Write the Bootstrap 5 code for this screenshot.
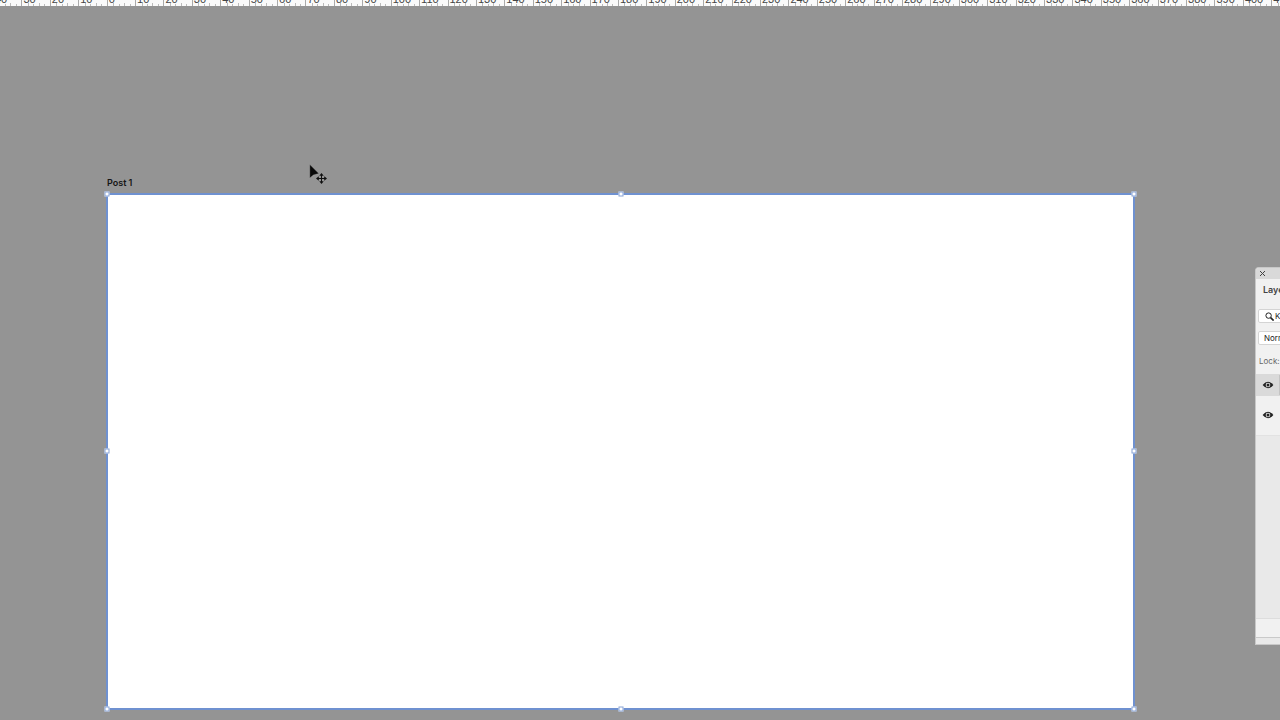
<!DOCTYPE html>
<html lang="en">
<head>
<meta charset="utf-8">
<meta name="viewport" content="width=device-width, initial-scale=1">
<title>Post 1</title>
<link href="https://cdn.jsdelivr.net/npm/bootstrap@5.3.0/dist/css/bootstrap.min.css" rel="stylesheet">
<style>
  body { background: #949494; color: #222; font-family: Inter, "Liberation Sans", sans-serif; font-size: 9px; line-height: 12px; }
  button, select { font: inherit; color: inherit; }
  .ruler { height: 6px; background: #fafafa; }
  .ruler-track { margin-left: -7px; margin-right: -20px; height: 6px; }
  .unit { flex: 1 1 0; min-width: 0; height: 6px; border-left: 1px solid #aaa; }
  .unit-label { left: 1px; bottom: 1px; font: 11px/11px "Liberation Sans", sans-serif; color: #444; }
  .tick { flex: 1 1 0; height: 2px; border-left: 1px solid #bbb; }
  .tick:first-child { border-color: transparent; }
  .tick:nth-child(even) { height: 3px; }
  .workspace { padding-left: 106px; }
  .board-column { margin-top: 171px; margin-right: 120px; }
  .board-title { font-size: 9px; line-height: 12px; font-weight: 600; color: #151515; padding-left: 1px; margin-bottom: 4px; }
  .artboard { box-sizing: content-box; aspect-ratio: 2 / 1; border: 2px solid #6f91d0; }
  .grips { inset: -1px; }
  .grip { width: 5px; height: 5px; background: #fff; border: 1px solid #88a3d6; }
  .pointer { left: 309px; top: 164px; }
  .panel-slot { width: 25px; margin-top: 261px; height: 378px; border: 1px solid #c8c8c8; border-width: 1px 0 1px 1px; border-radius: 4px 0 0 0; background: #e9e9e9; }
  .panel-body { width: 240px; font-size: 8px; }
  .panel-bar { height: 11px; background: #d9d9d9; }
  .panel-tools { background: #f1f1f1; height: 95px; padding: 5px 2px 0; }
  .tab-button { font-size: 9px; line-height: 12px; padding: 0 5px; margin-bottom: 13px; font-weight: 600; color: #444; }
  .field { height: 14px; width: 90px; background: #fff; border: 1px solid #d4d4d4; border-radius: 2px; }
  .field select { appearance: none; background: none; border: 0; padding: 0; line-height: 12px; }
  .field-filter { padding-left: 6px; gap: 1px; }
  .field-mode { margin-top: 8px; padding-left: 5px; }
  .lock-label { margin-top: 10px; padding-left: 1px; color: #666; }
  .layer-row { padding-left: 6px; padding-bottom: 1px; background: #f1f1f1; height: 39px; }
  .layer-row.chosen { background: #dadada; height: 22px; }
  .thumb { width: 20px; height: 20px; background: #fff; border: 1px solid #c4c4c4; margin-left: 5px; }
  .layers-empty { height: 183px; border-top: 1px solid #e2e2e2; }
  .panel-foot { height: 20px; background: #f1f1f1; border-top: 1px solid #ddd; border-bottom: 1px solid #c9c9c9; }
</style>
<script src="https://cdn.jsdelivr.net/npm/bootstrap@5.3.0/dist/js/bootstrap.bundle.min.js"></script>
</head>
<body class="position-relative overflow-hidden vh-100">
<header class="ruler overflow-hidden"><div class="ruler-track d-flex" id="ruler"></div></header>
<main class="workspace d-flex align-items-start">
  <section class="board-column flex-grow-1">
    <h1 class="board-title mt-0">Post 1</h1>
    <div class="artboard bg-white position-relative">
      <div class="grips position-absolute">
        <i class="grip position-absolute top-0 start-0 translate-middle"></i>
        <i class="grip position-absolute top-0 start-50 translate-middle"></i>
        <i class="grip position-absolute top-0 start-100 translate-middle"></i>
        <i class="grip position-absolute top-50 start-0 translate-middle"></i>
        <i class="grip position-absolute top-50 start-100 translate-middle"></i>
        <i class="grip position-absolute top-100 start-0 translate-middle"></i>
        <i class="grip position-absolute top-100 start-50 translate-middle"></i>
        <i class="grip position-absolute top-100 start-100 translate-middle"></i>
      </div>
    </div>
  </section>
  <aside class="panel-slot flex-shrink-0 overflow-hidden">
    <div class="panel-body">
      <div class="panel-bar d-flex align-items-center">
        <button class="btn p-0 border-0 d-flex ms-1" aria-label="Close panel"><svg width="5" height="5" viewBox="0 0 5 5" stroke="#444"><path d="M0 0L5 5M5 0L0 5"/></svg></button>
      </div>
      <div class="panel-tools">
        <button class="tab-button btn border-0 d-block rounded-0">Layers</button>
        <label class="field field-filter d-flex align-items-center">
          <svg width="9" height="9" viewBox="0 0 9 9" fill="none" stroke="#222"><circle cx="3.6" cy="3.6" r="2.7"/><path d="M5.6 5.6L8.6 8.6" stroke-width="1.6"/></svg>
          <select aria-label="Filter"><option>Kind</option></select>
        </label>
        <label class="field field-mode d-flex align-items-center"><select aria-label="Blend mode"><option>Normal</option></select></label>
        <div class="lock-label">Lock:</div>
      </div>
      <div class="layer-row chosen d-flex align-items-center">
        <button class="btn border-0 p-0 d-flex" aria-label="Toggle Post 1"><svg width="12" height="8" viewBox="0 0 12 8"><path d="M.6 4Q6-2.6 11.4 4Q6 10.6.6 4Z" fill="#222"/><circle cx="6" cy="4" r="2.3" fill="#eee"/><circle cx="6" cy="4" r="1.5" fill="#222"/></svg></button>
        <span class="thumb"></span>
      </div>
      <div class="layer-row d-flex align-items-center">
        <button class="btn border-0 p-0 d-flex" aria-label="Toggle layer"><svg width="12" height="8" viewBox="0 0 12 8"><path d="M.6 4Q6-2.6 11.4 4Q6 10.6.6 4Z" fill="#222"/><circle cx="6" cy="4" r="2.3" fill="#eee"/><circle cx="6" cy="4" r="1.5" fill="#222"/></svg></button>
      </div>
      <div class="layers-empty"></div>
      <div class="panel-foot"></div>
    </div>
  </aside>
</main>
<svg class="pointer position-absolute" width="18" height="21" viewBox="0 0 18 21"><path d="M.8 .5V14L4.300 11L9.800 9.500Z" fill="#080808" stroke="#b0b0b0" stroke-width=".3"/><path d="M12.500 10.500V18.500M8 14.500H17" stroke="#111" fill="none"/><path d="M12.500 9L14.700 11.800H10.300ZM12.500 20L14.700 17.200H10.300ZM7 14.500L9.800 12.300V16.700ZM18 14.500L15.200 12.300V16.700Z" fill="#111"/></svg>
<script>
  const ruler = document.getElementById('ruler');
  for (let value = -40; value < 420; value += 10) {
    const unit = document.createElement('div');
    unit.className = 'unit d-flex align-items-end position-relative';
    unit.innerHTML = '<i class="tick"></i>'.repeat(5) + `<span class="unit-label position-absolute">${Math.abs(value)}</span>`;
    ruler.append(unit);
  }
</script>
</body>
</html>
